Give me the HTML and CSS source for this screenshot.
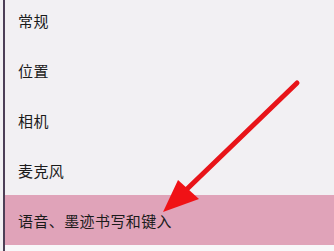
FILE: index.html
```html
<!DOCTYPE html>
<html lang="zh-CN">
<head>
<meta charset="utf-8">
<link rel="stylesheet" href="styles.css">
</head>
<body>
<div class="panel">
  <ul class="menu">
    <li class="item">常规</li>
    <li class="item">位置</li>
    <li class="item">相机</li>
    <li class="item">麦克风</li>
    <li class="item active">语音、墨迹书写和键入</li>
  </ul>
  <div class="rest"></div>
  <svg class="arrow" width="334" height="251" viewBox="0 0 334 251">
    <line x1="297" y1="83" x2="186" y2="190" stroke="#e81419" stroke-width="5" stroke-linecap="round"/>
    <polygon points="163,212 178,180 199,199" fill="#f01216"/>
  </svg>
</div>
</body>
</html>
```
FILE: styles.css
```css
html, body {
  margin: 0;
  padding: 0;
}
body {
  width: 334px;
  height: 251px;
  overflow: hidden;
  background: #f3f1f4;
  font-family: "Noto Sans CJK SC", "Microsoft YaHei", sans-serif;
}
.panel {
  position: relative;
  height: 251px;
  margin-left: 3px;
  border-left: 2px solid #4d3f57;
  background: #f2f0f3;
  display: flex;
  flex-direction: column;
}
.menu {
  list-style: none;
  margin: 0;
  padding: 0;
  display: flex;
  flex-direction: column;
  margin-top: -5px;
}
.item {
  height: 50px;
  display: flex;
  align-items: center;
  padding-left: 13px;
  font-size: 15px;
  letter-spacing: 0.4px;
  color: #1b1b1b;
  line-height: 1;
}
.item.active {
  background: #e0a3b9;
}
.rest {
  flex: 1;
  background: #f8f7f9;
}
.arrow {
  position: absolute;
  left: -5px;
  top: 0;
}
```
